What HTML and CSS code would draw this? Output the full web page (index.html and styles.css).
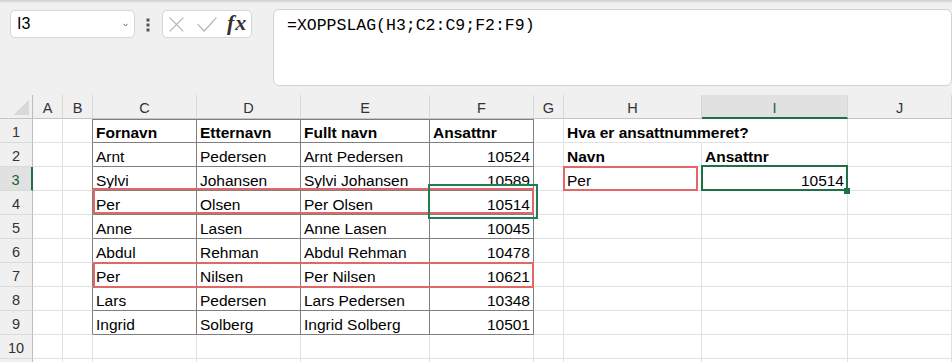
FILE: index.html
```html
<!DOCTYPE html>
<html lang="no">
<head>
  <meta charset="UTF-8">
  <meta name="viewport" content="width=device-width, initial-scale=1.0">
  <title>XOPPSLAG</title>
  <link rel="stylesheet" href="styles.css">
</head>
<body>
  <div class="app">
    <!-- Formula bar -->
    <div class="toolbar">
      <div class="namebox">
        <span>I3</span>
        <svg class="caret" width="5" height="4" viewBox="0 0 5 4"><path d="M0.5 0.8 L2.5 3 L4.5 0.8" fill="none" stroke="#666" stroke-width="1"/></svg>
      </div>
      <svg class="kebab" width="4" height="14" viewBox="0 0 4 14">
        <rect x="0.5" y="0.5" width="3" height="3" fill="#555"/>
        <rect x="0.5" y="5.5" width="3" height="3" fill="#555"/>
        <rect x="0.5" y="10.5" width="3" height="3" fill="#555"/>
      </svg>
      <div class="fxbox">
        <svg class="cancel" width="15" height="15" viewBox="0 0 15 15"><path d="M0.7 0.7 L14.3 14.3 M14.3 0.7 L0.7 14.3" fill="none" stroke="#b3b3b3" stroke-width="1.2"/></svg>
        <svg class="enter" width="20" height="15" viewBox="0 0 20 15"><path d="M0.6 7.2 L7.2 14 L19.4 0.6" fill="none" stroke="#b3b3b3" stroke-width="1.2"/></svg>
        <span class="fx">fx</span>
      </div>
      <div class="formula">=XOPPSLAG(H3;C2:C9;F2:F9)</div>
    </div>

    <!-- Sheet -->
    <div class="sheet">
      <div class="row head">
        <div class="corner"></div>
        <div>A</div><div>B</div><div>C</div><div>D</div><div>E</div><div>F</div><div>G</div><div>H</div><div class="sel">I</div><div>J</div>
      </div>
      <div class="row">
        <div class="num">1</div><div></div><div class="l"></div>
        <div class="t top b">Fornavn</div><div class="t top b">Etternavn</div><div class="t top b">Fullt navn</div><div class="t top b">Ansattnr</div>
        <div></div><div class="b over">Hva er ansattnummeret?</div><div></div><div></div>
      </div>
      <div class="row">
        <div class="num">2</div><div></div><div class="l"></div>
        <div class="t">Arnt</div><div class="t">Pedersen</div><div class="t">Arnt Pedersen</div><div class="t n">10524</div>
        <div></div><div class="b">Navn</div><div class="b">Ansattnr</div><div></div>
      </div>
      <div class="row">
        <div class="num sel">3</div><div></div><div class="l"></div>
        <div class="t">Sylvi</div><div class="t">Johansen</div><div class="t">Sylvi Johansen</div><div class="t n">10589</div>
        <div></div><div>Per</div><div class="n">10514</div><div></div>
      </div>
      <div class="row">
        <div class="num">4</div><div></div><div class="l"></div>
        <div class="t">Per</div><div class="t">Olsen</div><div class="t">Per Olsen</div><div class="t n">10514</div>
        <div></div><div></div><div></div><div></div>
      </div>
      <div class="row">
        <div class="num">5</div><div></div><div class="l"></div>
        <div class="t">Anne</div><div class="t">Lasen</div><div class="t">Anne Lasen</div><div class="t n">10045</div>
        <div></div><div></div><div></div><div></div>
      </div>
      <div class="row">
        <div class="num">6</div><div></div><div class="l"></div>
        <div class="t">Abdul</div><div class="t">Rehman</div><div class="t">Abdul Rehman</div><div class="t n">10478</div>
        <div></div><div></div><div></div><div></div>
      </div>
      <div class="row">
        <div class="num">7</div><div></div><div class="l"></div>
        <div class="t">Per</div><div class="t">Nilsen</div><div class="t">Per Nilsen</div><div class="t n">10621</div>
        <div></div><div></div><div></div><div></div>
      </div>
      <div class="row">
        <div class="num">8</div><div></div><div class="l"></div>
        <div class="t">Lars</div><div class="t">Pedersen</div><div class="t">Lars Pedersen</div><div class="t n">10348</div>
        <div></div><div></div><div></div><div></div>
      </div>
      <div class="row">
        <div class="num">9</div><div></div><div class="l"></div>
        <div class="t">Ingrid</div><div class="t">Solberg</div><div class="t">Ingrid Solberg</div><div class="t n">10501</div>
        <div></div><div></div><div></div><div></div>
      </div>
      <div class="row">
        <div class="num">10</div><div></div><div></div>
        <div></div><div></div><div></div><div></div>
        <div></div><div></div><div></div><div></div>
      </div>
      <div class="row">
        <div class="num"></div><div></div><div></div>
        <div></div><div></div><div></div><div></div>
        <div></div><div></div><div></div><div></div>
      </div>

      <!-- Shapes drawn over the sheet -->
      <div class="mark red row4"></div>
      <div class="mark red row7"></div>
      <div class="mark red lookup"></div>
      <div class="mark green found"></div>
      <div class="selection"><span class="handle"></span></div>
    </div>
  </div>
</body>
</html>
```

FILE: styles.css
```css
body {
  margin: 0;
  background: #f0f0f0;
  font-family: "Liberation Sans", Arial, sans-serif;
  color: #000;
  overflow: hidden;
}
.app {
  width: 952px;
  height: 362px;
  overflow: hidden;
}

/* Formula bar */
.toolbar {
  display: flex;
  align-items: flex-start;
  height: 95px;
  box-sizing: border-box;
  padding: 10px 0 0 10px;
  background: linear-gradient(#cdcdcd 0, #ececec 3px, #f0f0f0 5px);
}
.namebox {
  width: 125px;
  height: 28px;
  box-sizing: border-box;
  display: flex;
  align-items: center;
  justify-content: space-between;
  padding: 0 6px 0 6px;
  background: #fff;
  border: 1px solid #d6d6d6;
  border-radius: 5px;
  font-size: 16px;
}
.caret {
  margin-top: 1px;
}
.kebab {
  margin: 8px 0 0 11px;
}
.fxbox {
  width: 90px;
  height: 28px;
  box-sizing: border-box;
  margin-left: 12px;
  display: flex;
  align-items: center;
  padding-left: 6px;
  background: #fff;
  border: 1px solid #d6d6d6;
  border-radius: 5px;
}
.enter {
  margin-left: 13px;
}
.fx {
  margin-left: 10px;
  margin-top: -3px;
  font-family: "Liberation Serif", "Times New Roman", serif;
  font-style: italic;
  font-weight: bold;
  font-size: 22px;
  letter-spacing: 1px;
  color: #333;
}
.formula {
  flex: 1;
  height: 77px;
  box-sizing: border-box;
  margin: -1px 0 0 21px;
  padding: 6px 0 0 13px;
  background: #fff;
  border: 1px solid #d2d2d2;
  border-radius: 6px;
  font-family: "Liberation Mono", "Courier New", monospace;
  font-size: 16.5px;
  line-height: 20px;
}

/* Sheet */
.sheet {
  position: relative;
  background: #fff;
}
.row {
  display: grid;
  grid-template-columns: 33px 30px 30px 104px 104px 129px 104px 30px 138px 146px 1fr;
  height: 24px;
}
.row > div {
  box-sizing: border-box;
  height: 24px;
  padding: 4px 3px 0;
  line-height: 19px;
  font-size: 15.5px;
  white-space: nowrap;
  overflow: hidden;
  border-right: 1px solid #e1e1e1;
  border-bottom: 1px solid #e1e1e1;
}
.head > div {
  padding: 3px 0 0;
  line-height: 20px;
  font-size: 14.5px;
  color: #333;
  text-align: center;
  background: #f0f0f0;
  border-right-color: #d8d8d8;
  border-bottom-color: #c4c4c4;
}
.head > .corner {
  background: linear-gradient(to top left, #d9d9d9 50%, transparent 50%) 13px 5px / 16px 15px no-repeat, #f0f0f0;
  border-right-color: #bdbdbd;
}
.head > .sel {
  background: #e1e1e1;
  color: #14623a;
  border-bottom: 2px solid #1e7145;
}
.row > .num {
  padding: 3px 0 0;
  line-height: 20px;
  font-size: 14.5px;
  color: #333;
  text-align: center;
  background: #f0f0f0;
  border-right-color: #bdbdbd;
  border-bottom-color: #d9d9d9;
}
.row > .num.sel {
  background: #e1e1e1;
  color: #14623a;
  border-right: 2px solid #1e7145;
}
.row > .t {
  border-right-color: #7f7f7f;
  border-bottom-color: #7f7f7f;
}
.row > .l {
  border-right-color: #7f7f7f;
}
.top {
  box-shadow: inset 0 1px 0 #7f7f7f;
}
.b {
  font-weight: bold;
}
.n {
  text-align: right;
}
.row > .over {
  overflow: visible;
  border-right-color: transparent;
}

/* Shapes */
.mark {
  position: absolute;
  box-sizing: border-box;
  border: 2px solid #e36767;
}
.row4 {
  left: 93px;
  top: 93px;
  width: 441px;
  height: 26px;
}
.row7 {
  left: 93px;
  top: 167px;
  width: 441px;
  height: 26px;
}
.lookup {
  left: 563px;
  top: 71px;
  width: 135px;
  height: 25px;
}
.green {
  border-color: #1f7d4f;
}
.found {
  left: 428px;
  top: 89px;
  width: 110px;
  height: 35px;
}
.selection {
  position: absolute;
  box-sizing: border-box;
  left: 701px;
  top: 70px;
  width: 147px;
  height: 26px;
  border: 2px solid #1e7145;
}
.handle {
  position: absolute;
  right: -4px;
  bottom: -5px;
  width: 6px;
  height: 6px;
  background: #1e7145;
}
```
